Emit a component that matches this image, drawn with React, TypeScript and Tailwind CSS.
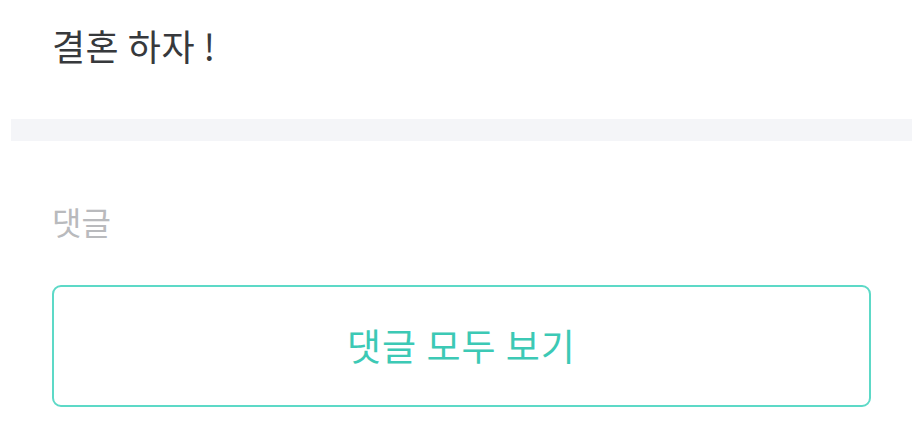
import React from "react";

const FONT = { fontFamily: '"Noto Sans CJK KR", "Noto Sans", sans-serif' };

export default function App() {
  return (
    <div className="w-[912px] h-[439px] bg-white overflow-hidden" style={FONT}>
      <div className="pl-[52px] pt-[20px] h-[119px]">
        <h1 className="text-[36px] leading-[50px] text-[#37393c] font-normal tracking-[0.5px]">결혼 하자 !</h1>
      </div>

      <div className="ml-[11px] h-[22px] bg-[#f4f5f8]" />

      <div className="pl-[52px] pr-[41px]">
        <p className="mt-[59px] text-[32px] leading-[42px] text-[#b9babd]">댓글</p>
        <button className="mt-[43px] w-full h-[122px] rounded-[9px] border-2 border-[#5dd9c7] bg-white text-[37px] tracking-[1px] text-[#3cc9b5] flex items-center justify-center">
          댓글 모두 보기
        </button>
      </div>
    </div>
  );
}
